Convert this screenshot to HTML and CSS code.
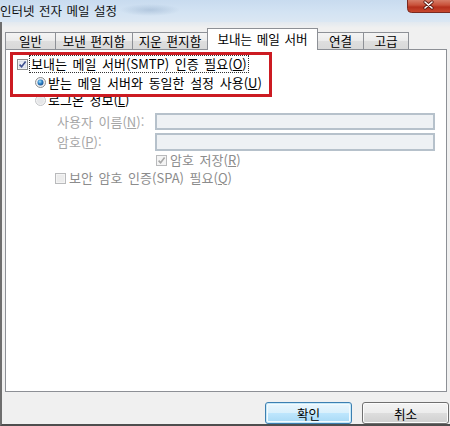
FILE: index.html
```html
<!DOCTYPE html>
<html lang="ko">
<head>
<meta charset="utf-8">
<title>인터넷 전자 메일 설정</title>
<link rel="stylesheet" href="styles.css">
</head>
<body>
<div class="window">
  <div class="titlebar">
    <span class="title">인터넷 전자 메일 설정</span>
    <svg class="close-btn" width="43" height="13" viewBox="0 0 43 13">
      <defs>
        <linearGradient id="cg" x1="0" y1="0" x2="0" y2="1">
          <stop offset="0" stop-color="#d98570"/>
          <stop offset="0.45" stop-color="#c9523a"/>
          <stop offset="0.6" stop-color="#b5301c"/>
          <stop offset="1" stop-color="#c94a30"/>
        </linearGradient>
      </defs>
      <path d="M0.5 -1 L0.5 8.5 Q0.5 12.5 4.5 12.5 L44 12.5 L44 -1 Z" fill="url(#cg)" stroke="#7a2a20"/>
      <path d="M18 2 L25 8 M25 2 L18 8" stroke="#5a1a12" stroke-width="3.2" stroke-linecap="round"/>
      <path d="M18 2 L25 8 M25 2 L18 8" stroke="#ffffff" stroke-width="1.6" stroke-linecap="round"/>
    </svg>
  </div>
  <div class="client">
    <div class="tabs">
      <div class="tab tab-general">일반</div>
      <div class="tab tab-sent">보낸 편지함</div>
      <div class="tab tab-deleted">지운 편지함</div>
      <div class="tab tab-outgoing active">보내는 메일 서버</div>
      <div class="tab tab-connect">연결</div>
      <div class="tab tab-advanced">고급</div>
    </div>
    <div class="panel">
      <div class="row r1">
        <span class="cb"><svg width="11" height="11" viewBox="0 0 11 11"><rect x="0.5" y="0.5" width="10" height="10" fill="#fff" stroke="#8e8f8f"/><rect x="2" y="2" width="7" height="7" fill="#e9ecf3" stroke="#c4cad6" stroke-width="0.6"/><path d="M2.6 5.6 L4.6 7.8 L8.6 2.6" fill="none" stroke="#3e4f8f" stroke-width="1.6"/></svg></span>
        <span class="lbl focus">보내는 메일 서버(SMTP) 인증 필요(<u>O</u>)</span>
      </div>
      <div class="row r2">
        <span class="rd"><svg width="11" height="11" viewBox="0 0 11 11"><defs><radialGradient id="dot" cx="0.4" cy="0.35" r="0.7"><stop offset="0" stop-color="#a8e4fb"/><stop offset="0.5" stop-color="#2f83c8"/><stop offset="1" stop-color="#1b4f8c"/></radialGradient></defs><circle cx="5.5" cy="5.5" r="5" fill="#eef0f3" stroke="#8e8f8f"/><circle cx="5.5" cy="5.5" r="3" fill="url(#dot)"/></svg></span>
        <span class="lbl">받는 메일 서버와 동일한 설정 사용(<u>U</u>)</span>
      </div>
      <div class="row r3">
        <span class="rd"><svg width="11" height="11" viewBox="0 0 11 11"><circle cx="5.5" cy="5.5" r="5" fill="#f3f3f3" stroke="#c3c5c8"/><circle cx="5.5" cy="5.5" r="3.4" fill="#e6e7e9"/></svg></span>
        <span class="lbl">로그온 정보(<u>L</u>)</span>
      </div>
      <div class="row r4">
        <span class="field-label">사용자 이름(<u>N</u>):</span>
        <span class="field"></span>
      </div>
      <div class="row r5">
        <span class="field-label">암호(<u>P</u>):</span>
        <span class="field"></span>
      </div>
      <div class="row r6">
        <span class="cb"><svg width="11" height="11" viewBox="0 0 11 11"><rect x="0.5" y="0.5" width="10" height="10" fill="#f4f4f4" stroke="#b9babc"/><path d="M2.6 5.6 L4.6 7.8 L8.6 2.6" fill="none" stroke="#a7a7a7" stroke-width="1.6"/></svg></span>
        <span class="lbl dim">암호 저장(<u>R</u>)</span>
      </div>
      <div class="row r7">
        <span class="cb"><svg width="11" height="11" viewBox="0 0 11 11"><rect x="0.5" y="0.5" width="10" height="10" fill="#f4f4f4" stroke="#b9babc"/><rect x="2" y="2" width="7" height="7" fill="#ececec"/></svg></span>
        <span class="lbl dim">보안 암호 인증(SPA) 필요(<u>Q</u>)</span>
      </div>
      <div class="redbox"></div>
    </div>
    <div class="buttons">
      <button class="btn default">확인</button>
      <button class="btn">취소</button>
    </div>
  </div>
</div>
</body>
</html>
```
FILE: styles.css
```css
html, body {
  margin: 0;
  padding: 0;
}
body {
  width: 450px;
  height: 426px;
  overflow: hidden;
  background: #f0f0f0;
  font-family: "Noto Sans CJK KR", "Noto Sans", sans-serif;
  font-size: 13px;
  color: #000;
}
.window {
  display: flex;
  flex-direction: column;
  width: 450px;
  height: 426px;
}
.titlebar {
  height: 22px;
  display: flex;
  align-items: flex-start;
  background:
    radial-gradient(ellipse 30px 6px at 150px 10px, rgba(120,150,185,0.35), rgba(120,150,185,0) 100%),
    linear-gradient(to bottom, #c8dbef 0%, #d3e3f3 55%, #dbe7f3 100%);
}
.title {
  line-height: 22px;
  font-size: 12.5px;
  color: #111;
  word-spacing: 1px;
}
.close-btn {
  flex: none;
  margin-left: auto;
  display: block;
}
.client {
  flex: 1;
  display: flex;
  flex-direction: column;
  border-left: 2px solid #6e6e6e;
  border-bottom: 2px solid #4e4e4e;
  padding: 6px 3px 0 3px;
  background: linear-gradient(to bottom, #e2e9f0 0px, #f0f0f0 6px);
}
.tabs {
  display: flex;
  align-items: flex-end;
  height: 22px;
  position: relative;
  z-index: 1;
  font-size: 12.6px;
  word-spacing: 1px;
}
.tab {
  box-sizing: border-box;
  height: 17px;
  margin-bottom: 1px;
  margin-right: -1px;
  border: 1px solid #8d9096;
  border-bottom: none;
  background: linear-gradient(to bottom, #f4f4f4 0%, #ebebeb 50%, #dedede 51%, #d9d9d9 100%);
  text-align: center;
  line-height: 16px;
  white-space: nowrap;
}
.tab.active {
  height: 22px;
  margin-bottom: 0;
  background: #fff;
  line-height: 20px;
}
.tab-general { width: 51px; }
.tab-sent { width: 78px; }
.tab-deleted { width: 76px; }
.tab-outgoing { width: 111px; }
.tab-connect { width: 47px; }
.tab-advanced { width: 46px; }

.panel {
  position: relative;
  box-sizing: border-box;
  height: 343px;
  margin-top: -1px;
  background: #fff;
  border: 1px solid #8d9096;
  padding-top: 5px;
}
.row {
  display: flex;
  align-items: center;
  line-height: 16px;
  white-space: nowrap;
  word-spacing: 2px;
}
.r1 { height: 18px; padding-left: 11px; }
.r2 { height: 19px; padding-left: 29px; }
.r3 { height: 16px; padding-left: 29px; }
.r4 { height: 17px; margin-top: 5px; padding-left: 51px; }
.r5 { height: 18px; margin-top: 3px; padding-left: 51px; }
.r6 { height: 18px; padding-left: 150px; }
.r7 { height: 18px; padding-left: 49px; }

.cb, .rd {
  display: flex;
  width: 11px;
  height: 11px;
  margin-right: 3px;
}
.rd { margin-right: 2px; }
.lbl { color: #000; }
.focus {
  outline: 1px dotted #333;
  outline-offset: 0;
  padding: 0 1px;
  margin-left: -1px;
}
.dim { color: #8c8c8c; }
.field-label {
  width: 98px;
  color: #a6a6a6;
}
.field {
  box-sizing: border-box;
  width: 280px;
  height: 100%;
  border: 2px solid #b6c1cb;
  background: #eef1f4;
}
.redbox {
  position: absolute;
  left: 4px;
  top: 2px;
  width: 262px;
  height: 45px;
  box-sizing: border-box;
  border: 3px solid #cc1b22;
}
.buttons {
  display: flex;
  justify-content: flex-end;
  gap: 10px;
  margin-top: 10px;
  margin-right: -2px;
}
.btn {
  box-sizing: border-box;
  width: 87px;
  height: 22px;
  padding: 0;
  border: 1px solid #707070;
  border-radius: 3px;
  background: linear-gradient(to bottom, #f4f4f4 0%, #ececec 50%, #dddddd 51%, #d0d0d0 100%);
  font-family: "Noto Sans CJK KR", "Noto Sans", sans-serif;
  font-size: 12.6px;
  color: #000;
  box-shadow: inset 0 0 0 1px #fcfcfc;
}
.btn.default {
  border-color: #3c7fb1;
  background: linear-gradient(to bottom, #eaf6fd 0%, #d9f0fc 50%, #bee6fd 51%, #a7d9f5 100%);
  box-shadow: inset 0 0 0 1px #c6e8f8, inset 0 0 0 2px #f2fafe;
}
```
